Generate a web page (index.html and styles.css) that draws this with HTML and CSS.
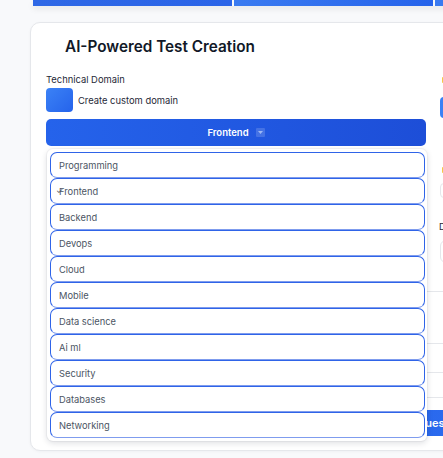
FILE: index.html
```html
<!DOCTYPE html>
<html lang="en">
<head>
<meta charset="utf-8">
<title>AI-Powered Test Creation</title>
<link rel="stylesheet" href="styles.css">
</head>
<body>
<div class="page">
  <div class="tabs">
    <div class="tab"></div>
    <div class="tab"></div>
    <div class="tab"></div>
  </div>
  <section class="card">
    <h1 class="title">AI-Powered Test Creation</h1>
    <div class="grid">
      <div class="col-left">
        <div class="label">Technical Domain</div>
        <label class="check-row">
          <span class="checkbox"></span>
          <span class="check-text">Create custom domain</span>
        </label>
        <div class="select">
          <button class="select-btn" type="button">Frontend <span class="caret"><svg width="5" height="3" viewBox="0 0 5 3"><path d="M0 0h5L2.5 3z" fill="#9db8f5"/></svg></span></button>
          <ul class="menu">
            <li class="item">Programming</li>
            <li class="item selected"><span class="tick">✓</span>Frontend</li>
            <li class="item">Backend</li>
            <li class="item">Devops</li>
            <li class="item">Cloud</li>
            <li class="item">Mobile</li>
            <li class="item">Data science</li>
            <li class="item">Ai ml</li>
            <li class="item">Security</li>
            <li class="item">Databases</li>
            <li class="item">Networking</li>
          </ul>
        </div>
      </div>
      <div class="col-right">
        <div class="label icon-label"><span class="bolt"></span>Question Types</div>
        <div class="seg">
          <span class="seg-btn">Multiple choice</span>
        </div>
        <div class="label icon-label second"><span class="bolt"></span>Skills</div>
        <div class="tag-box">Add skill</div>
        <div class="label diff">Difficulty Level</div>
        <div class="input">Intermediate</div>
      </div>
    </div>
    <div class="bottom">
      <div class="rows">
        <div class="row r1"></div>
        <div class="row r2"></div>
        <div class="row r3"></div>
        <div class="row r4"></div>
      </div>
      <button class="generate" type="button">Generate Questions</button>
    </div>
  </section>
</div>
</body>
</html>
```

FILE: styles.css
```css
* { box-sizing: border-box; }
html, body { margin: 0; padding: 0; }
body {
  background: #f8f9fb;
  font-family: Inter, "Noto Sans", sans-serif;
  overflow: hidden;
  width: 443px;
  height: 458px;
}
.page {
  padding-left: 30px;
  width: 900px;
}
.tabs {
  display: flex;
  gap: 2px;
  margin-left: 3px;
  height: 6px;
  box-shadow: 0 3px 6px rgba(15, 23, 42, 0.08);
}
.tab {
  width: 199px;
  height: 6px;
  background: linear-gradient(90deg, #3a7bf1, #2563eb);
}
.tab:first-child { background: linear-gradient(90deg, #2e68e6, #2a64e8); }
.card {
  margin-top: 16px;
  width: 776px;
  height: 429px;
  background: #fff;
  border: 1px solid #e5e7eb;
  border-radius: 10px;
  padding: 10px 15px 16px;
  box-shadow: 0 1px 3px rgba(15, 23, 42, 0.04);
}
.title {
  margin: 0;
  padding-left: 19px;
  font-size: 15.3px;
  line-height: 28px;
  font-weight: 600;
  color: #111827;
}
.grid {
  display: grid;
  grid-template-columns: 380px 350px;
  column-gap: 14px;
  margin-top: 11px;
}
.label {
  font-size: 9.4px;
  line-height: 16px;
  color: #1f2937;
}
.check-row {
  display: flex;
  align-items: center;
  gap: 5px;
  height: 24px;
}
.checkbox {
  width: 27px;
  height: 24px;
  border-radius: 4px;
  background: linear-gradient(135deg, #3b82f6, #2563eb);
}
.check-text {
  font-size: 9.4px;
  color: #1f2937;
}
.select {
  position: relative;
  margin-top: 7px;
}
.select-btn {
  width: 380px;
  height: 27px;
  border: none;
  border-radius: 5px;
  background: linear-gradient(90deg, #2563eb, #1d4ed8);
  color: #fff;
  font-family: inherit;
  font-size: 9.5px;
  font-weight: 600;
  display: flex;
  align-items: center;
  justify-content: center;
  gap: 7px;
  padding: 0;
}
.caret {
  width: 9px;
  height: 9px;
  background: rgba(255, 255, 255, 0.16);
  border-radius: 1px;
  display: flex;
  align-items: center;
  justify-content: center;
}
.menu {
  position: absolute;
  top: 30px;
  left: 1px;
  width: 380px;
  margin: 0;
  padding: 3px 2px 3px 3px;
  list-style: none;
  background: #fff;
  border-radius: 6px;
  box-shadow: 0 2px 6px rgba(15, 23, 42, 0.14), 0 0 0 1px rgba(15, 23, 42, 0.04);
  z-index: 5;
}
.item {
  position: relative;
  height: 26px;
  border: 1px solid #2f64e8;
  border-bottom-color: #7f9cee;
  border-radius: 7px;
  padding-left: 8px;
  display: flex;
  align-items: center;
  font-size: 9.3px;
  color: #4b5563;
}
.tick {
  position: absolute;
  left: 5px;
  top: 7px;
  font-size: 8px;
  color: #4b5563;
}
.col-right {
  display: flex;
  flex-direction: column;
}
.icon-label {
  display: flex;
  align-items: center;
  gap: 4px;
  height: 16px;
}
.bolt {
  width: 6px;
  height: 6px;
  margin-left: 2px;
  background: #f6c945;
  border-radius: 1px;
}
.seg {
  margin-top: 9px;
  display: flex;
}
.seg-btn {
  width: 110px;
  height: 21px;
  border-radius: 4px;
  background: linear-gradient(90deg, #3b82f6, #2563eb);
  color: #fff;
  font-size: 9px;
  display: flex;
  align-items: center;
  padding-left: 8px;
}
.second { margin-top: 44px; }
.tag-box {
  margin-top: 5px;
  height: 15px;
  width: 200px;
  border: 1px solid #e5e7eb;
  border-radius: 4px;
  font-size: 8px;
  color: #9ca3af;
  padding-left: 6px;
}
.diff { margin-top: 21px; margin-left: -1px; }
.input {
  margin-top: 5px;
  height: 23px;
  border: 1px solid #e5e7eb;
  border-radius: 6px;
  font-size: 9.4px;
  color: #374151;
  padding: 4px 8px;
}
.bottom {
  margin-left: 60px;
  width: 624px;
}
.row { border-bottom: 1px solid #e5e7eb; }
.r1 { height: 29px; }
.r2 { height: 52px; }
.r3 { height: 29px; }
.r4 { height: 25px; }
.generate {
  display: block;
  margin-top: 12px;
  width: 624px;
  height: 26px;
  border: none;
  border-radius: 5px;
  background: linear-gradient(90deg, #2563eb, #2f6ff0);
  color: #fff;
  font-family: inherit;
  font-size: 11px;
  font-weight: 600;
}
```
